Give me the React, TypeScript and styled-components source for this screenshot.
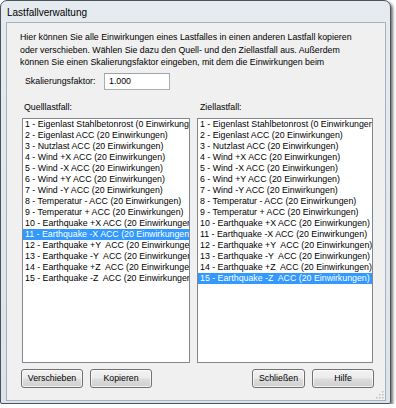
import React from "react";
import styled, { createGlobalStyle } from "styled-components";

const GlobalStyle = createGlobalStyle`
  body {
    margin: 0;
    background: #ffffff;
    font-family: "Liberation Sans", Arial, sans-serif;
  }
`;

const Window = styled.div`
  width: 391px;
  height: 404px;
  box-sizing: border-box;
  display: flex;
  flex-direction: column;
  border: 1px solid #4a525c;
  border-radius: 7px 7px 2px 2px;
  background: linear-gradient(180deg, #e6ebf0 0%, #dde3ea 100%);
  box-shadow: 2px 2px 3px rgba(0, 0, 0, 0.55);
  padding: 0 4px 2px 5px;
`;

const TitleBar = styled.div`
  height: 21px;
  display: flex;
  align-items: center;
  padding: 2px 0 0 1px;
  box-sizing: border-box;
  font-size: 10px;
  color: #000;
`;

const Client = styled.div`
  position: relative;
  flex: 1;
  display: flex;
  flex-direction: column;
  background: #f0f0f0;
  border: 1px solid #a8b2bd;
  padding-top: 8px;
  font-size: 8.8px;
  color: #000;
`;

const Intro = styled.p`
  margin: 0 0 0 13px;
  line-height: 12.5px;
  width: 350px;
`;

const ScaleRow = styled.div`
  display: flex;
  align-items: center;
  margin: 4px 0 0 18px;
`;

const ScaleLabel = styled.span`
  width: 79px;
`;

const ScaleInput = styled.div`
  width: 60px;
  height: 15px;
  background: #fff;
  border: 1px solid #abadb3;
  border-top-color: #9ea3ab;
  display: flex;
  align-items: center;
  padding-left: 4px;
`;

const Columns = styled.div`
  display: flex;
  gap: 7px;
  margin: 11px 0 0 15px;
`;

const Column = styled.div<{ $width: number }>`
  display: flex;
  flex-direction: column;
  width: ${(p) => p.$width}px;
`;

const ListLabel = styled.div<{ $indent: number }>`
  line-height: 12px;
  padding-left: ${(p) => p.$indent}px;
  margin-bottom: 5px;
`;

const ListBox = styled.div`
  height: 245px;
  box-sizing: border-box;
  background: #fff;
  border: 1px solid #828790;
  overflow: hidden;
`;

const ListItem = styled.div<{ $selected?: boolean }>`
  height: 11px;
  line-height: 11px;
  white-space: pre;
  overflow: hidden;
  padding-left: 2px;
  background: ${(p) => (p.$selected ? "#3399ff" : "transparent")};
  color: ${(p) => (p.$selected ? "#fff" : "#000")};
`;

const ButtonRow = styled.div`
  display: flex;
  align-items: center;
  margin: 6px 0 0 14px;
  width: 353px;
`;

const ButtonGroup = styled.div`
  display: flex;
  gap: 7px;
`;

const Spacer = styled.div`
  flex: 1;
`;

const Button = styled.button<{ $width: number }>`
  width: ${(p) => p.$width}px;
  height: 19px;
  padding: 0;
  border: 1px solid #707070;
  border-radius: 3px;
  background: linear-gradient(180deg, #f2f2f2 0%, #ebebeb 48%, #dddddd 52%, #cfcfcf 100%);
  box-shadow: inset 0 0 0 1px rgba(255, 255, 255, 0.7);
  font-family: "Liberation Sans", Arial, sans-serif;
  font-size: 8.8px;
  color: #000;
`;

const Grip = styled.svg`
  position: absolute;
  right: 1px;
  bottom: 1px;
`;

const items = [
  "1 - Eigenlast Stahlbetonrost (0 Einwirkungen)",
  "2 - Eigenlast ACC (20 Einwirkungen)",
  "3 - Nutzlast ACC (20 Einwirkungen)",
  "4 - Wind +X ACC (20 Einwirkungen)",
  "5 - Wind -X ACC (20 Einwirkungen)",
  "6 - Wind +Y ACC (20 Einwirkungen)",
  "7 - Wind -Y ACC (20 Einwirkungen)",
  "8 - Temperatur - ACC (20 Einwirkungen)",
  "9 - Temperatur + ACC (20 Einwirkungen)",
  "10 - Earthquake +X ACC (20 Einwirkungen)",
  "11 - Earthquake -X ACC (20 Einwirkungen)",
  "12 - Earthquake +Y  ACC (20 Einwirkungen)",
  "13 - Earthquake -Y  ACC (20 Einwirkungen)",
  "14 - Earthquake +Z  ACC (20 Einwirkungen)",
  "15 - Earthquake -Z  ACC (20 Einwirkungen)",
];

const LoadList: React.FC<{ selected: number }> = ({ selected }) => (
  <ListBox>
    {items.map((text, i) => (
      <ListItem key={i} $selected={i === selected}>
        {text}
      </ListItem>
    ))}
  </ListBox>
);

const gripDots = [
  [7, 1],
  [7, 4],
  [4, 4],
  [7, 7],
  [4, 7],
  [1, 7],
];

export default function App() {
  return (
    <>
      <GlobalStyle />
      <Window>
        <TitleBar>Lastfallverwaltung</TitleBar>
        <Client>
          <Intro>
            Hier können Sie alle Einwirkungen eines Lastfalles in einen anderen Lastfall kopieren
            oder verschieben. Wählen Sie dazu den Quell- und den Ziellastfall aus. Außerdem
            können Sie einen Skalierungsfaktor eingeben, mit dem die Einwirkungen beim
          </Intro>
          <ScaleRow>
            <ScaleLabel>Skalierungsfaktor:</ScaleLabel>
            <ScaleInput>1.000</ScaleInput>
          </ScaleRow>
          <Columns>
            <Column $width={168}>
              <ListLabel $indent={2}>Quelllastfall:</ListLabel>
              <LoadList selected={10} />
            </Column>
            <Column $width={176}>
              <ListLabel $indent={3}>Ziellastfall:</ListLabel>
              <LoadList selected={14} />
            </Column>
          </Columns>
          <ButtonRow>
            <ButtonGroup>
              <Button $width={62}>Verschieben</Button>
              <Button $width={62}>Kopieren</Button>
            </ButtonGroup>
            <Spacer />
            <ButtonGroup>
              <Button $width={53}>Schließen</Button>
              <Button $width={62}>Hilfe</Button>
            </ButtonGroup>
          </ButtonRow>
          <Grip width="9" height="9" viewBox="0 0 9 9">
            {gripDots.map(([x, y], i) => (
              <rect key={i} x={x} y={y} width="1.5" height="1.5" fill="#b8bec6" />
            ))}
          </Grip>
        </Client>
      </Window>
    </>
  );
}
